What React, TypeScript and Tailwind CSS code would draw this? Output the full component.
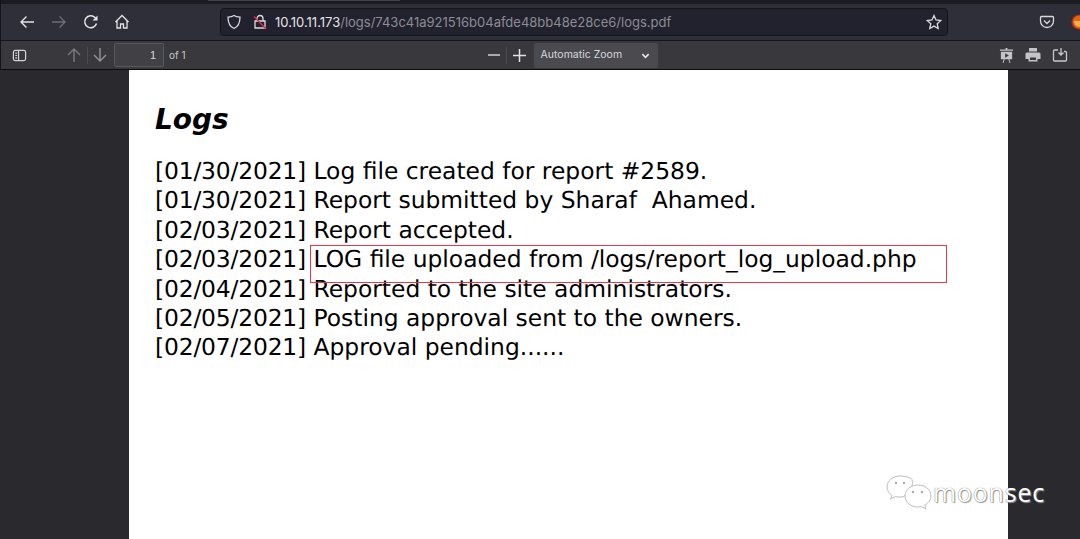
import React from 'react';

const logs: [string, string][] = [
  ['[01/30/2021]', 'Log file created for report #2589.'],
  ['[01/30/2021]', 'Report submitted by Sharaf  Ahamed.'],
  ['[02/03/2021]', 'Report accepted.'],
  ['[02/03/2021]', 'LOG file uploaded from /logs/report_log_upload.php'],
  ['[02/04/2021]', 'Reported to the site administrators.'],
  ['[02/05/2021]', 'Posting approval sent to the owners.'],
  ['[02/07/2021]', 'Approval pending......'],
];

const NavBar: React.FC = () => (
  <div className="flex h-[37px] items-center border-b border-[#15141a] bg-[#2e2f38] pl-[19px] text-[#e8e8ec]">
    <svg className="shrink-0" width="16" height="16" viewBox="0 0 16 16" fill="none" stroke="#e4e4e8" strokeWidth="1.4">
      <path d="M15 8H2M7.5 2.5 2 8l5.500 5.500" />
    </svg>
    <svg className="ml-[16px] shrink-0" width="16" height="16" viewBox="0 0 16 16" fill="none" stroke="#6e6d75" strokeWidth="1.400">
      <path d="M1 8h13M8.500 2.500 14 8l-5.500 5.500" />
    </svg>
    <svg className="ml-[16px] shrink-0" width="16" height="16" viewBox="0 0 16 16" fill="none" stroke="#e4e4e8" strokeWidth="1.500">
      <path d="M13.500 9.500A6 6 0 1 1 12 3.500L14 5.500" />
      <path d="M14.500 1.500v5h-5" fill="#e4e4e8" stroke="none" />
    </svg>
    <svg className="ml-[15px] shrink-0" width="16" height="16" viewBox="0 0 16 16" fill="none" stroke="#e4e4e8" strokeWidth="1.300">
      <path d="M1.500 8 8 1.500 14.500 8M3 6.800V14h3.500v-4h3v4H13V6.800" />
    </svg>
    <div className="ml-[90px] flex h-[28px] w-[728px] shrink-0 items-center rounded-[4px] border border-[#16151b] bg-[#22222e] pl-[5px]">
      <svg className="shrink-0" width="16" height="16" viewBox="0 0 16 16" fill="none" stroke="#d4d4da" strokeWidth="1.300">
        <path d="M8 1.500c2 1.200 4 1.500 6 1.700 0 5-1.500 9.300-6 11.300C3.500 12.500 2 8.200 2 3.200c2-.2 4-.5 6-1.700Z" />
      </svg>
      <svg className="ml-[10px] shrink-0" width="16" height="16" viewBox="0 0 16 16" fill="none" stroke="#dcdce2" strokeWidth="1.300">
        <path d="M5 7V4.500a3 3 0 0 1 6 0V7M3 7h10v7H3Z" />
        <path d="M2 2.500 14 15" stroke="#e22850" strokeWidth="1.400" />
      </svg>
      <span className="ml-[7px] whitespace-nowrap font-['Inter',sans-serif] text-[13px] leading-none text-[#e4e4e8]">
        10.10.11.173<span className="text-[#8c8c94]">/logs/743c41a921516b04afde48bb48e28ce6/logs.pdf</span>
      </span>
      <svg className="ml-auto mr-[5px] shrink-0" width="16" height="16" viewBox="0 0 16 16" fill="none" stroke="#d8d8dc" strokeWidth="1.300">
        <path d="M8 1.500 10 6l4.800.5-3.600 3.200 1 4.800L8 12.100l-4.200 2.400 1-4.800L1.200 6.500 6 6Z" />
      </svg>
    </div>
    <svg className="ml-[91px] shrink-0" width="16" height="16" viewBox="0 0 16 16" fill="none" stroke="#d8d8dc" strokeWidth="1.300">
      <path d="M2.500 2.500h11A1.200 1.200 0 0 1 14.500 3.700V7a6.500 6.500 0 0 1-13 0V3.700A1.200 1.200 0 0 1 2.500 2.500Z" />
      <path d="m5 6.500 3 3 3-3" />
    </svg>
    <svg className="ml-[16px] shrink-0" width="16" height="16" viewBox="0 0 16 16">
      <circle cx="8" cy="8" r="7" fill="#d96a14" stroke="#b0202c" strokeWidth="1.200" />
      <path d="M3 7h7l3 3-5 3-4-2Z" fill="#f2b04c" />
    </svg>
  </div>
);

const PdfToolbar: React.FC = () => (
  <div className="flex h-[29px] items-center border-b border-[#0c0c0d] bg-[#38383d] text-[#d2d2d6]">
    <svg className="ml-[12px] shrink-0" width="15" height="15" viewBox="0 0 16 16" fill="none" stroke="#d4d4d8" strokeWidth="1.300">
      <rect x="1.500" y="2.500" width="13" height="11" rx="2" />
      <path d="M7 2.500v11" />
      <path d="M3.500 5.500h2M3.500 8h2M3.500 10.500h2" />
    </svg>
    <svg className="ml-[39px] shrink-0" width="16" height="16" viewBox="0 0 16 16" fill="none" stroke="#77777c" strokeWidth="1.500">
      <path d="M8 15V2M2 8l6-6 6 6" />
    </svg>
    <div className="ml-[5px] h-[17px] w-px bg-[#4a4a4f]" />
    <svg className="ml-[4px] shrink-0" width="16" height="16" viewBox="0 0 16 16" fill="none" stroke="#8e8e93" strokeWidth="1.500">
      <path d="M8 1v13M2 8l6 6 6-6" />
    </svg>
    <div className="ml-[6px] flex h-[24px] w-[50px] items-center justify-end rounded-[2px] border border-[#5a5a5e] bg-[#404045] pr-[7px] font-['Liberation_Sans',sans-serif] text-[11px] text-[#d8d8dc]">
      1
    </div>
    <span className="ml-[5px] font-['Inter',sans-serif] text-[10px] text-[#c8c8cc]">of 1</span>
    <svg className="ml-[302px] shrink-0" width="12" height="12" viewBox="0 0 12 12" stroke="#d0d0d4" strokeWidth="1.500">
      <path d="M0 6h12" />
    </svg>
    <div className="ml-[6px] h-[17px] w-px bg-[#4a4a4f]" />
    <svg className="ml-[6px] shrink-0" width="13" height="13" viewBox="0 0 13 13" stroke="#e0e0e4" strokeWidth="1.500">
      <path d="M0 6.500h13M6.500 0v13" />
    </svg>
    <div className="ml-[8px] flex h-[25px] w-[124px] items-center rounded-[2px] bg-[#4a4a4f] pl-[7px] pr-[8px] font-['Inter',sans-serif] text-[10.500px] text-[#d8d8dc]">
      Automatic Zoom
      <svg className="ml-auto" width="9" height="9" viewBox="0 0 10 10" fill="none" stroke="#e8e8ec" strokeWidth="1.800">
        <path d="m1.500 3.500 3.500 3.500 3.500-3.500" />
      </svg>
    </div>
    <svg className="ml-[341px] shrink-0" width="15" height="15" viewBox="0 0 16 16" fill="#c4c4c8">
      <path d="M7 0h2v1.500h6V3H1V1.500h6ZM2 4h12v8H2Zm1.500 13L5 12h1l-1.200 4ZM12.500 17 11 12h-1l1.200 4Z" />
      <path d="M6.500 5.500v5l4-2.500Z" fill="#38383d" />
    </svg>
    <svg className="ml-[11px] shrink-0" width="16" height="16" viewBox="0 0 16 16" fill="#c4c4c8">
      <path d="M4 1h8v3.500H4ZM2 5.500h12a1.500 1.500 0 0 1 1.500 1.500v5H12.500v2.500h-9V12H.500V7A1.500 1.500 0 0 1 2 5.500Zm3 5V13h6v-2.500Z" />
    </svg>
    <svg className="ml-[11px] shrink-0" width="16" height="16" viewBox="0 0 16 16" fill="none" stroke="#c8c8cc" strokeWidth="1.300">
      <path d="M6 3H2.500a1 1 0 0 0-1 1v9a1 1 0 0 0 1 1h11a1 1 0 0 0 1-1V5.500a1 1 0 0 0-1-1H12" />
      <path d="M9 1v7M6.500 5.500 9 8l2.500-2.500" />
    </svg>
  </div>
);

const Watermark: React.FC = () => (
  <div className="absolute left-[886px] top-[474px] flex items-center">
    <svg className="shrink-0" width="52" height="36" viewBox="0 0 52 36" fill="#fff" stroke="#bdbdbd" strokeWidth="1">
      <path d="M14 2C7 2 1 6.500 1 13c0 3.500 2 6.500 5 8.500L4.500 25l5-2.500c1.500.5 3 .6 4.500.6 1 0 2-.1 3-.3C27 18 28 6 25 4.500 22 2.800 18 2 14 2Z" />
      <path d="M32 11c-7 0-13 4.500-13 11s6 11 13 11c1.200 0 2.400-.1 3.500-.4l4.500 2.400-1.200-4c3.800-2 6.200-5.200 6.200-9 0-6.500-6-11-13-11Z" />
      <circle cx="10" cy="9" r="1.200" fill="#aaa" stroke="none" />
      <circle cx="18" cy="9" r="1.200" fill="#aaa" stroke="none" />
      <circle cx="27" cy="18" r="1.200" fill="#aaa" stroke="none" />
      <circle cx="36" cy="18" r="1.200" fill="#aaa" stroke="none" />
    </svg>
    <span className="-ml-[5px] whitespace-nowrap font-['Open_Sans',sans-serif] text-[25px] font-normal leading-none tracking-[0.8px] text-white [text-shadow:0_0_1px_#555,1px_1px_1px_#999]">
      moonsec
    </span>
  </div>
);

const App: React.FC = () => {
  return (
    <div className="relative h-[539px] w-[1080px] overflow-hidden bg-[#2a2a2e]">
      <div className="flex h-[4px] bg-[#1c1b22]">
        <div className="ml-[208px] h-px w-[192px] bg-[#42414d]" />
      </div>
      <NavBar />
      <PdfToolbar />
      <div className="ml-[129px] h-[469px] w-[879px] bg-white pl-[26px] pt-[33px] font-['DejaVu_Sans',sans-serif] text-black">
        <h1 className="text-[28px] font-bold italic leading-[34px]">Logs</h1>
        <div className="mt-[20px] text-[23.400px] leading-[29.400px] [text-rendering:geometricPrecision]">
          {logs.map(([date, text]) => (
            <div key={text} className="whitespace-pre">
              <span className="tracking-[-0.17px]">{date}</span> {text}
            </div>
          ))}
        </div>
      </div>
      <div className="absolute left-[310px] top-[245px] h-[38px] w-[637px] border border-[#e8364a]" />
      <div className="absolute left-0 top-0 h-[70px] w-px bg-[#15141a]" />
      <Watermark />
    </div>
  );
};

export default App;
